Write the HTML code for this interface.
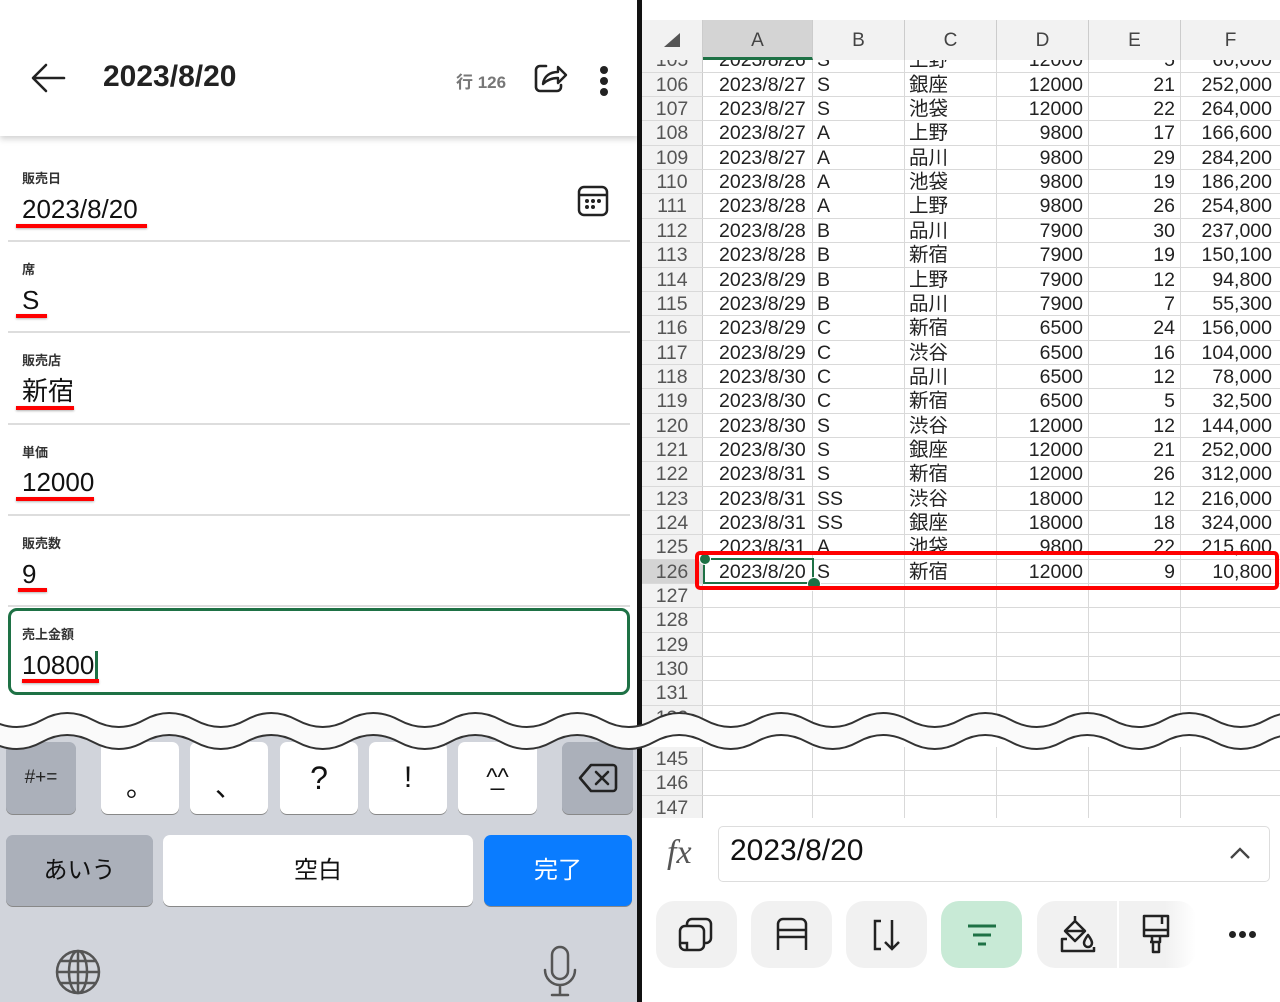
<!DOCTYPE html>
<html><head><meta charset="utf-8">
<style>
*{margin:0;padding:0;box-sizing:border-box}
body{width:1280px;height:1002px;position:relative;overflow:hidden;background:#fff;font-family:"Liberation Sans","Noto Sans CJK JP",sans-serif;color:#111}
.a{position:absolute}
.lbl{position:absolute;left:22px;font-size:13px;font-weight:bold;color:#333}
.val{position:absolute;left:22px;font-size:26px;color:#111;line-height:30px}
.ul{position:absolute;height:4px;background:#f00;box-shadow:0 1px 2px rgba(0,0,0,.3)}
.sep{position:absolute;left:8px;width:622px;height:2px;background:#ddd}
.key{position:absolute;border-radius:7px;background:#fff;box-shadow:0 1px 0 #888;font-size:28px;text-align:center;color:#111}
.g{background:#abb0ba}
.grid{position:absolute;left:642px;width:638px;overflow:hidden}
.r{display:flex;height:24.35px;border-bottom:1px solid #d9d9d9;font-size:19.5px;line-height:25px;color:#222;background:#fff}
.r div{border-right:1px solid #d9d9d9;white-space:nowrap;overflow:hidden;flex:none}
.r .n{width:61px;text-align:center;color:#555;background:#f2f2f2;border-right:1px solid #ccc}
.r .c1{width:110px;padding-left:16px}
.r .c2{width:92px;padding-left:4px}
.r .c3{width:92px;padding-left:4px}
.r .c4{width:92px;text-align:right;padding-right:5px}
.r .c5{width:92px;text-align:right;padding-right:5px}
.r .c6{width:99px;text-align:right;padding-right:8px;border-right:none}
.hd{position:absolute;top:20px;height:40px;background:#f2f2f2;border-right:1px solid #ccc;font-size:19px;color:#444;text-align:center;line-height:42px}
.tb{position:absolute;top:901px;width:81px;height:67px;border-radius:18px;background:#f1f1f1}
</style></head><body>

<!-- LEFT PANEL -->
<div class="a" style="left:0;top:0;width:638px;height:136px;background:#fff;box-shadow:0 3px 6px rgba(0,0,0,.18)"></div>
<svg class="a" style="left:28px;top:60px" width="40" height="36" viewBox="0 0 40 36"><path d="M36 18H6M18 5L5 18l13 13" fill="none" stroke="#222" stroke-width="2.6" stroke-linecap="round" stroke-linejoin="round"/></svg>
<div class="a" style="left:103px;top:60px;font-size:30px;font-weight:bold;color:#222">2023/8/20</div>
<div class="a" style="left:456px;top:68px;font-size:17px;font-weight:bold;color:#777">行 126</div>
<svg class="a" style="left:532px;top:61px" width="38" height="34" viewBox="0 0 38 34"><path d="M14 5H8a4 4 0 0 0-4 4v17a4 4 0 0 0 4 4h17a4 4 0 0 0 4-4v-2" fill="none" stroke="#222" stroke-width="2.6" stroke-linecap="round"/><path d="M11 23c1-8 7-12 15-12V6l8 8-8 8v-5c-6 0-11 2-15 6z" fill="none" stroke="#222" stroke-width="2.4" stroke-linejoin="round"/></svg>
<div class="a" style="left:600px;top:66px;width:8px;height:8px;border-radius:50%;background:#222;box-shadow:0 11px 0 #222,0 22px 0 #222"></div>

<div class="lbl" style="top:168px">販売日</div>
<div class="val" style="top:194px">2023/8/20</div>
<div class="ul" style="left:16px;top:224px;width:131px"></div>
<svg class="a" style="left:577px;top:185px" width="32" height="32" viewBox="0 0 32 32"><rect x="2" y="2" width="28" height="28" rx="5" fill="none" stroke="#222" stroke-width="2.5"/><path d="M2 10h28" stroke="#222" stroke-width="2.5"/><g fill="#222"><circle cx="10" cy="16" r="2"/><circle cx="16" cy="16" r="2"/><circle cx="22" cy="16" r="2"/><circle cx="10" cy="22" r="2"/><circle cx="16" cy="22" r="2"/></g></svg>
<div class="sep" style="top:240px"></div>

<div class="lbl" style="top:259px">席</div>
<div class="val" style="top:285px">S</div>
<div class="ul" style="left:16px;top:314px;width:31px"></div>
<div class="sep" style="top:331px"></div>

<div class="lbl" style="top:350px">販売店</div>
<div class="val" style="top:376px">新宿</div>
<div class="ul" style="left:16px;top:406px;width:58px"></div>
<div class="sep" style="top:423px"></div>

<div class="lbl" style="top:442px">単価</div>
<div class="val" style="top:467px">12000</div>
<div class="ul" style="left:16px;top:497px;width:78px"></div>
<div class="sep" style="top:514px"></div>

<div class="lbl" style="top:533px">販売数</div>
<div class="val" style="top:559px">9</div>
<div class="ul" style="left:18px;top:588px;width:29px"></div>
<div class="sep" style="top:605px"></div>

<div class="a" style="left:8px;top:608px;width:622px;height:87px;border:3px solid #1e7145;border-radius:9px"></div>
<div class="lbl" style="top:624px">売上金額</div>
<div class="val" style="top:650px">10800</div>
<div class="a" style="left:95px;top:651px;width:3px;height:30px;background:#1e7145"></div>
<div class="ul" style="left:22px;top:679px;width:77px"></div>

<!-- keyboard -->
<div class="a" style="left:0;top:728px;width:638px;height:274px;background:#d1d4db"></div>
<div class="key g" style="left:6px;top:742px;width:70px;height:72px;font-size:19px;line-height:72px;color:#222">#+=</div>
<div class="key" style="left:101px;top:742px;width:78px;height:72px;line-height:90px">。</div>
<div class="key" style="left:190px;top:742px;width:78px;height:72px;line-height:90px">、</div>
<div class="key" style="left:280px;top:742px;width:78px;height:72px;line-height:72px;font-size:32px">?</div>
<div class="key" style="left:369px;top:742px;width:78px;height:72px;line-height:72px;font-size:30px">!</div>
<div class="key" style="left:458px;top:742px;width:79px;height:72px;line-height:72px;font-size:24px">^̲^</div>
<div class="key g" style="left:562px;top:742px;width:71px;height:72px"><svg style="margin-top:20px" width="40" height="32" viewBox="0 0 40 32"><path d="M13 3h22a3 3 0 0 1 3 3v20a3 3 0 0 1-3 3H13L2 16z" fill="none" stroke="#222" stroke-width="2.6" stroke-linejoin="round"/><path d="M18 10l12 12M30 10L18 22" stroke="#222" stroke-width="2.6" stroke-linecap="round"/></svg></div>
<div class="key g" style="left:6px;top:835px;width:147px;height:71px;font-size:24px;line-height:71px">あいう</div>
<div class="key" style="left:163px;top:835px;width:310px;height:71px;font-size:24px;line-height:71px">空白</div>
<div class="key" style="left:484px;top:835px;width:148px;height:71px;font-size:24px;line-height:71px;background:#0a7cff;color:#fff">完了</div>
<svg class="a" style="left:54px;top:948px" width="48" height="48" viewBox="0 0 48 48"><g fill="none" stroke="#555" stroke-width="2.5"><circle cx="24" cy="24" r="21"/><ellipse cx="24" cy="24" rx="9" ry="21"/><path d="M24 3v42M3 24h42M7 13h34M7 35h34"/></g></svg>
<svg class="a" style="left:540px;top:944px" width="40" height="54" viewBox="0 0 40 54"><g fill="none" stroke="#555" stroke-width="2.5" stroke-linecap="round"><rect x="12" y="3" width="16" height="32" rx="8"/><path d="M5 26a15 15 0 0 0 30 0M20 41v10M12 51h16"/></g></svg>

<!-- divider -->
<div class="a" style="left:637px;top:0;width:5px;height:1002px;background:#111"></div>

<!-- RIGHT PANEL -->
<div class="hd" style="left:642px;width:61px"></div>
<svg class="a" style="left:664px;top:33px" width="16" height="14"><path d="M16 0V14H0z" fill="#555"/></svg>
<div class="hd" style="left:703px;width:110px;background:#d4d4d4;border-bottom:3px solid #1e7145">A</div>
<div class="hd" style="left:813px;width:92px">B</div>
<div class="hd" style="left:905px;width:92px">C</div>
<div class="hd" style="left:997px;width:92px">D</div>
<div class="hd" style="left:1089px;width:92px">E</div>
<div class="hd" style="left:1181px;width:99px;border-right:none">F</div>

<div class="grid" style="top:60px;height:758px"><div style="position:relative;top:-11.6px">
<div class="r"><div class="n">105</div><div class="c1">2023/8/26</div><div class="c2">S</div><div class="c3">上野</div><div class="c4">12000</div><div class="c5">5</div><div class="c6">60,000</div></div>
<div class="r"><div class="n">106</div><div class="c1">2023/8/27</div><div class="c2">S</div><div class="c3">銀座</div><div class="c4">12000</div><div class="c5">21</div><div class="c6">252,000</div></div>
<div class="r"><div class="n">107</div><div class="c1">2023/8/27</div><div class="c2">S</div><div class="c3">池袋</div><div class="c4">12000</div><div class="c5">22</div><div class="c6">264,000</div></div>
<div class="r"><div class="n">108</div><div class="c1">2023/8/27</div><div class="c2">A</div><div class="c3">上野</div><div class="c4">9800</div><div class="c5">17</div><div class="c6">166,600</div></div>
<div class="r"><div class="n">109</div><div class="c1">2023/8/27</div><div class="c2">A</div><div class="c3">品川</div><div class="c4">9800</div><div class="c5">29</div><div class="c6">284,200</div></div>
<div class="r"><div class="n">110</div><div class="c1">2023/8/28</div><div class="c2">A</div><div class="c3">池袋</div><div class="c4">9800</div><div class="c5">19</div><div class="c6">186,200</div></div>
<div class="r"><div class="n">111</div><div class="c1">2023/8/28</div><div class="c2">A</div><div class="c3">上野</div><div class="c4">9800</div><div class="c5">26</div><div class="c6">254,800</div></div>
<div class="r"><div class="n">112</div><div class="c1">2023/8/28</div><div class="c2">B</div><div class="c3">品川</div><div class="c4">7900</div><div class="c5">30</div><div class="c6">237,000</div></div>
<div class="r"><div class="n">113</div><div class="c1">2023/8/28</div><div class="c2">B</div><div class="c3">新宿</div><div class="c4">7900</div><div class="c5">19</div><div class="c6">150,100</div></div>
<div class="r"><div class="n">114</div><div class="c1">2023/8/29</div><div class="c2">B</div><div class="c3">上野</div><div class="c4">7900</div><div class="c5">12</div><div class="c6">94,800</div></div>
<div class="r"><div class="n">115</div><div class="c1">2023/8/29</div><div class="c2">B</div><div class="c3">品川</div><div class="c4">7900</div><div class="c5">7</div><div class="c6">55,300</div></div>
<div class="r"><div class="n">116</div><div class="c1">2023/8/29</div><div class="c2">C</div><div class="c3">新宿</div><div class="c4">6500</div><div class="c5">24</div><div class="c6">156,000</div></div>
<div class="r"><div class="n">117</div><div class="c1">2023/8/29</div><div class="c2">C</div><div class="c3">渋谷</div><div class="c4">6500</div><div class="c5">16</div><div class="c6">104,000</div></div>
<div class="r"><div class="n">118</div><div class="c1">2023/8/30</div><div class="c2">C</div><div class="c3">品川</div><div class="c4">6500</div><div class="c5">12</div><div class="c6">78,000</div></div>
<div class="r"><div class="n">119</div><div class="c1">2023/8/30</div><div class="c2">C</div><div class="c3">新宿</div><div class="c4">6500</div><div class="c5">5</div><div class="c6">32,500</div></div>
<div class="r"><div class="n">120</div><div class="c1">2023/8/30</div><div class="c2">S</div><div class="c3">渋谷</div><div class="c4">12000</div><div class="c5">12</div><div class="c6">144,000</div></div>
<div class="r"><div class="n">121</div><div class="c1">2023/8/30</div><div class="c2">S</div><div class="c3">銀座</div><div class="c4">12000</div><div class="c5">21</div><div class="c6">252,000</div></div>
<div class="r"><div class="n">122</div><div class="c1">2023/8/31</div><div class="c2">S</div><div class="c3">新宿</div><div class="c4">12000</div><div class="c5">26</div><div class="c6">312,000</div></div>
<div class="r"><div class="n">123</div><div class="c1">2023/8/31</div><div class="c2">SS</div><div class="c3">渋谷</div><div class="c4">18000</div><div class="c5">12</div><div class="c6">216,000</div></div>
<div class="r"><div class="n">124</div><div class="c1">2023/8/31</div><div class="c2">SS</div><div class="c3">銀座</div><div class="c4">18000</div><div class="c5">18</div><div class="c6">324,000</div></div>
<div class="r"><div class="n">125</div><div class="c1">2023/8/31</div><div class="c2">A</div><div class="c3">池袋</div><div class="c4">9800</div><div class="c5">22</div><div class="c6">215,600</div></div>
<div class="r"><div class="n" style="background:#d4d4d4">126</div><div class="c1">2023/8/20</div><div class="c2">S</div><div class="c3">新宿</div><div class="c4">12000</div><div class="c5">9</div><div class="c6">10,800</div></div>
<div class="r"><div class="n">127</div><div class="c1"></div><div class="c2"></div><div class="c3"></div><div class="c4"></div><div class="c5"></div><div class="c6"></div></div>
<div class="r"><div class="n">128</div><div class="c1"></div><div class="c2"></div><div class="c3"></div><div class="c4"></div><div class="c5"></div><div class="c6"></div></div>
<div class="r"><div class="n">129</div><div class="c1"></div><div class="c2"></div><div class="c3"></div><div class="c4"></div><div class="c5"></div><div class="c6"></div></div>
<div class="r"><div class="n">130</div><div class="c1"></div><div class="c2"></div><div class="c3"></div><div class="c4"></div><div class="c5"></div><div class="c6"></div></div>
<div class="r"><div class="n">131</div><div class="c1"></div><div class="c2"></div><div class="c3"></div><div class="c4"></div><div class="c5"></div><div class="c6"></div></div>
<div class="r"><div class="n">132</div><div class="c1"></div><div class="c2"></div><div class="c3"></div><div class="c4"></div><div class="c5"></div><div class="c6"></div></div>
</div></div>
<div class="grid" style="top:747px;height:71px">
<div class="r"><div class="n">145</div><div class="c1"></div><div class="c2"></div><div class="c3"></div><div class="c4"></div><div class="c5"></div><div class="c6"></div></div>
<div class="r"><div class="n">146</div><div class="c1"></div><div class="c2"></div><div class="c3"></div><div class="c4"></div><div class="c5"></div><div class="c6"></div></div>
<div class="r"><div class="n">147</div><div class="c1"></div><div class="c2"></div><div class="c3"></div><div class="c4"></div><div class="c5"></div><div class="c6"></div></div>
</div>

<!-- selection -->
<div class="a" style="left:703px;top:558px;width:111px;height:26px;border:2px solid #1e7145"></div>
<div class="a" style="left:699px;top:553px;width:12px;height:12px;border-radius:50%;background:#1e7145;border:1px solid #fff"></div>
<div class="a" style="left:807px;top:577px;width:14px;height:14px;border-radius:50%;background:#1e7145;border:1px solid #fff"></div>
<div class="a" style="left:695px;top:551px;width:584px;height:39px;border:4px solid #f00;border-radius:5px"></div>

<!-- formula bar -->
<div class="a" style="left:667px;top:834px;font-family:'Liberation Serif',serif;font-style:italic;font-size:34px;color:#555">fx</div>
<div class="a" style="left:718px;top:826px;width:552px;height:56px;border:1px solid #ddd;border-radius:5px;font-size:30px;line-height:48px;padding-left:11px;color:#111">2023/8/20</div>
<svg class="a" style="left:1228px;top:845px" width="24" height="16"><path d="M3 13L12 4l9 9" fill="none" stroke="#444" stroke-width="2.3"/></svg>

<div class="tb" style="left:656px"></div>
<div class="tb" style="left:751px"></div>
<div class="tb" style="left:846px"></div>
<div class="tb" style="left:941px;background:#c8ead6"></div>
<div class="tb" style="left:1037px;width:80px;border-radius:18px 0 0 18px"></div>
<div class="tb" style="left:1119px;width:77px;border-radius:0 18px 18px 0;background:linear-gradient(90deg,#f1f1f1 60%,#fff)"></div>
<svg class="a" style="left:676px;top:915px" width="40" height="40" viewBox="0 0 40 40"><g fill="none" stroke="#222" stroke-width="2.5"><rect x="4" y="11" width="24" height="24" rx="5"/><path d="M11 10V9a5 5 0 0 1 5-5h14a5 5 0 0 1 5 5v14a5 5 0 0 1-5 5h-1"/><path d="M4 28h7v7"/></g></svg>
<svg class="a" style="left:772px;top:915px" width="40" height="40" viewBox="0 0 40 40"><g fill="none" stroke="#222" stroke-width="2.5"><path d="M6 35V9a5 5 0 0 1 5-5h18a5 5 0 0 1 5 5v26M6 15h28M6 22h28"/></g></svg>
<svg class="a" style="left:867px;top:915px" width="40" height="40" viewBox="0 0 40 40"><g fill="none" stroke="#222" stroke-width="2.5"><path d="M14 6H8v28h6M25 5v29M18 27l7 7 7-7"/></g></svg>
<svg class="a" style="left:962px;top:918px" width="40" height="34" viewBox="0 0 40 34"><g stroke="#1e7145" stroke-width="3"><path d="M6 8h28M11 17h18M16 26h8"/></g></svg>
<svg class="a" style="left:1057px;top:913px" width="42" height="42" viewBox="0 0 42 42"><g fill="none" stroke="#222" stroke-width="2.5" stroke-linejoin="round"><path d="M18 3v7M18 8l10 10-10 10-10-10z"/><path d="M8 18h20"/><path d="M31 22c-3 4-4 6-4 8a4 4 0 0 0 8 0c0-2-1-4-4-8z"/><path d="M10 26H5v12h32v-4"/></g></svg>
<svg class="a" style="left:1138px;top:913px" width="36" height="42" viewBox="0 0 36 42"><g fill="none" stroke="#222" stroke-width="2.5" stroke-linejoin="round"><path d="M6 3h24v20H6zM6 17h24M24 3v8M14 23v6h-2v0M14 29h8v-6M15 29v10h6V29"/></g></svg>
<div class="a" style="left:1229px;top:931px;width:7px;height:7px;border-radius:50%;background:#222;box-shadow:10px 0 0 #222,20px 0 0 #222"></div>

<!-- wave overlay -->
<svg class="a" style="left:0;top:700px" width="1280" height="56" viewBox="0 0 1280 56">
<defs><path id="w" d="M-60 20 q25 -14 51 0 t51 0 t51 0 t51 0 t51 0 t51 0 t51 0 t51 0 t51 0 t51 0 t51 0 t51 0 t51 0 t51 0 t51 0 t51 0 t51 0 t51 0 t51 0 t51 0 t51 0 t51 0 t51 0 t51 0 t51 0 t51 0 t51 0 t51 0"/></defs>
<path d="M-60 20 q25 -14 51 0 t51 0 t51 0 t51 0 t51 0 t51 0 t51 0 t51 0 t51 0 t51 0 t51 0 t51 0 t51 0 t51 0 t51 0 t51 0 t51 0 t51 0 t51 0 t51 0 t51 0 t51 0 t51 0 t51 0 t51 0 t51 0 t51 0 t51 0 V42 q-25 14 -51 0 t-51 0 t-51 0 t-51 0 t-51 0 t-51 0 t-51 0 t-51 0 t-51 0 t-51 0 t-51 0 t-51 0 t-51 0 t-51 0 t-51 0 t-51 0 t-51 0 t-51 0 t-51 0 t-51 0 t-51 0 t-51 0 t-51 0 t-51 0 t-51 0 t-51 0 t-51 0 t-51 0 z" fill="#fafafa"/>
<use href="#w" fill="none" stroke="#333" stroke-width="2"/>
<use href="#w" y="22" fill="none" stroke="#333" stroke-width="2"/>
</svg>
</body></html>
